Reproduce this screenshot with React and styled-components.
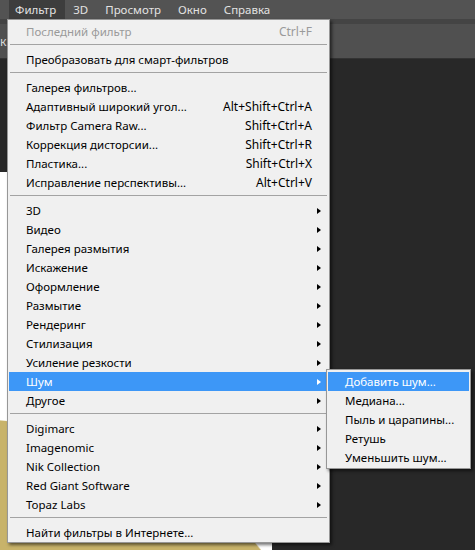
import React from 'react';
import styled, { createGlobalStyle } from 'styled-components';

const GlobalStyle = createGlobalStyle`
  html, body {
    margin: 0;
    background: #282828;
  }
  body {
    font-family: 'Noto Sans', 'DejaVu Sans', sans-serif;
  }
`;

const Frame = styled.div`
  position: relative;
  width: 475px;
  height: 550px;
  overflow: hidden;
  background: #282828;
`;

const MenuBar = styled.div`
  display: flex;
  height: 19px;
  padding-left: 9px;
  background: #535353;
`;

const MenuBarItem = styled.div`
  display: flex;
  align-items: center;
  padding: 0 9px 0 6px;
  margin-right: 2px;
  font-size: 11.5px;
  color: #e2e2e2;
  background: ${(p) => (p.$active ? '#3d3d3d' : 'transparent')};
`;

const OptionsBar = styled.div`
  display: flex;
  align-items: center;
  height: 34px;
  border-top: 5px solid #444444;
  border-bottom: 1px solid #333333;
  background: #505050;
  font-size: 12px;
  color: #d8d8d8;
`;

const Workspace = styled.div`
  padding-top: 113px;
`;

// white canvas with the tan shape of the photo in its lower part
const Document = styled.div`
  width: 272px;
  height: 400px;
  background:
    radial-gradient(ellipse 360px 290px at -40px 536px, #c8b36a 99.6%, transparent 100%),
    #ffffff;
`;

const DropMenu = styled.div`
  position: absolute;
  top: 19px;
  left: 7px;
  width: 319px;
  padding: 2px 1px 0;
  background: #f0f0f0;
  border: 1px solid #979797;
  box-shadow: 2px 2px 3px rgba(0, 0, 0, 0.55);
  font-size: 11.5px;
`;

const Item = styled.div`
  position: relative;
  display: flex;
  align-items: center;
  height: 19px;
  padding: 0 7px 0 17px;
  white-space: nowrap;
  color: ${(p) => (p.$disabled ? '#9a9a9a' : p.$hot ? '#ffffff' : '#000000')};
  background: ${(p) => (p.$hot ? '#3d97f7' : 'transparent')};
`;

const Label = styled.span`
  flex: 1;
`;

const Shortcut = styled.span`
  margin-right: 5px;
  font-size: 12px;
`;

const ArrowSlot = styled.span`
  display: flex;
  width: 4px;
  justify-content: flex-end;
`;

const Arrow = styled.span`
  width: 0;
  height: 0;
  border-top: 3.5px solid transparent;
  border-bottom: 3.5px solid transparent;
  border-left: 4px solid ${(p) => (p.$hot ? '#ffffff' : '#000000')};
`;

const Separator = styled.div`
  height: 1px;
  margin: 3px 1px 5px;
  background: #a3a3a3;
`;

const SubMenu = styled.div`
  position: absolute;
  top: -3px;
  left: calc(100% - 2px);
  width: 141px;
  padding: 2px 1px 1px;
  background: #f0f0f0;
  border: 1px solid #979797;
  box-shadow: 2px 2px 3px rgba(0, 0, 0, 0.55);
`;

const SubItem = styled.div`
  display: flex;
  align-items: center;
  height: 19px;
  padding-left: 17px;
  white-space: nowrap;
  color: ${(p) => (p.$hot ? '#ffffff' : '#000000')};
  background: ${(p) => (p.$hot ? '#3d97f7' : 'transparent')};
`;

const groups = [
  [{ label: 'Последний фильтр', shortcut: 'Ctrl+F', disabled: true }],
  [{ label: 'Преобразовать для смарт-фильтров' }],
  [
    { label: 'Галерея фильтров...' },
    { label: 'Адаптивный широкий угол...', shortcut: 'Alt+Shift+Ctrl+A' },
    { label: 'Фильтр Camera Raw...', shortcut: 'Shift+Ctrl+A' },
    { label: 'Коррекция дисторсии...', shortcut: 'Shift+Ctrl+R' },
    { label: 'Пластика...', shortcut: 'Shift+Ctrl+X' },
    { label: 'Исправление перспективы...', shortcut: 'Alt+Ctrl+V' },
  ],
  [
    { label: '3D', sub: true },
    { label: 'Видео', sub: true },
    { label: 'Галерея размытия', sub: true },
    { label: 'Искажение', sub: true },
    { label: 'Оформление', sub: true },
    { label: 'Размытие', sub: true },
    { label: 'Рендеринг', sub: true },
    { label: 'Стилизация', sub: true },
    { label: 'Усиление резкости', sub: true },
    { label: 'Шум', sub: true, open: true },
    { label: 'Другое', sub: true },
  ],
  [
    { label: 'Digimarc', sub: true },
    { label: 'Imagenomic', sub: true },
    { label: 'Nik Collection', sub: true },
    { label: 'Red Giant Software', sub: true },
    { label: 'Topaz Labs', sub: true },
  ],
  [{ label: 'Найти фильтры в Интернете...' }],
];

const noiseItems = ['Добавить шум...', 'Медиана...', 'Пыль и царапины...', 'Ретушь', 'Уменьшить шум...'];

const NoiseMenu = () => (
  <SubMenu>
    {noiseItems.map((label, i) => (
      <SubItem key={label} $hot={i === 0}>
        {label}
      </SubItem>
    ))}
  </SubMenu>
);

const FilterMenu = () => (
  <DropMenu>
    {groups.map((group, gi) => (
      <React.Fragment key={gi}>
        {gi > 0 && <Separator />}
        {group.map((item) => (
          <Item key={item.label} $hot={item.open} $disabled={item.disabled}>
            <Label>{item.label}</Label>
            {item.shortcut && <Shortcut>{item.shortcut}</Shortcut>}
            <ArrowSlot>{item.sub && <Arrow $hot={item.open} />}</ArrowSlot>
            {item.open && <NoiseMenu />}
          </Item>
        ))}
      </React.Fragment>
    ))}
  </DropMenu>
);

export default function App() {
  return (
    <Frame>
      <GlobalStyle />
      <MenuBar>
        <MenuBarItem $active>Фильтр</MenuBarItem>
        <MenuBarItem>3D</MenuBarItem>
        <MenuBarItem>Просмотр</MenuBarItem>
        <MenuBarItem>Окно</MenuBarItem>
        <MenuBarItem>Справка</MenuBarItem>
      </MenuBar>
      <OptionsBar>к.</OptionsBar>
      <Workspace>
        <Document />
      </Workspace>
      <FilterMenu />
    </Frame>
  );
}
